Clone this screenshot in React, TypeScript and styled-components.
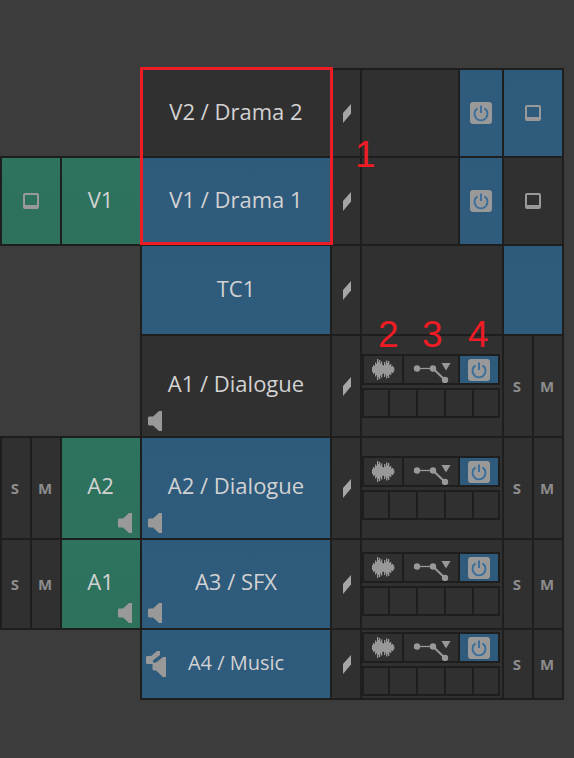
import styled, { createGlobalStyle } from 'styled-components'

const GlobalStyle = createGlobalStyle`
  html, body {
    margin: 0;
    background: #3c3c3c;
  }
`

const Page = styled.div`
  position: relative;
  width: 574px;
  height: 758px;
  padding: 70px 0 0 2px;
  box-sizing: border-box;
  overflow: hidden;
  font-family: "Open Sans", "Liberation Sans", sans-serif;
`

const Grid = styled.div`
  display: grid;
  grid-template-columns: 28px 28px 78px 188px 28px 96px 42px 28px 28px;
  grid-template-rows: 86px 86px 88px 100px 100px 88px 68px;
  gap: 2px;
`

const Cell = styled.div<{ $col: string; $row: number }>`
  grid-column: ${(p) => p.$col};
  grid-row: ${(p) => p.$row};
  position: relative;
  display: flex;
  align-items: center;
  justify-content: center;
  background: #303030;
  box-shadow: 0 0 0 2px #1e1e1e;
`

const BLUE = 'linear-gradient(180deg, #2e5a7c, #2f5b7d)'
const GREEN = 'linear-gradient(180deg, #2d735f, #2e715d)'

const NameCell = styled(Cell)<{ $small?: boolean; $active: boolean; $lift: number }>`
  padding-bottom: ${(p) => p.$lift}px;
  box-sizing: border-box;
  background: ${(p) => (p.$active ? BLUE : '#303030')};
  color: #d2d2d2;
  font-size: ${(p) => (p.$small ? '20px' : '22px')};
`

const PatchCell = styled(Cell)<{ $lift: number }>`
  padding: 0 1px ${(p) => p.$lift}px 0;
  box-sizing: border-box;
  background: ${GREEN};
  color: #d2d2d2;
  font-size: 22px;
`

const MonitorCell = styled(Cell)<{ $tone: 'blue' | 'green' | 'dark' }>`
  background: ${(p) => (p.$tone === 'blue' ? BLUE : p.$tone === 'green' ? GREEN : '#303030')};
`

const PowerCell = styled(Cell)`
  background: ${BLUE};
`

const LockCell = styled(Cell)`
  padding-left: 2px;
  box-sizing: border-box;
`

const SoloMute = styled(Cell)`
  padding-right: 2px;
  box-sizing: border-box;
  color: #8c8c8c;
  font-size: 15px;
  font-weight: 700;
`

const Strip = styled(Cell)`
  flex-direction: column;
  align-items: flex-start;
  gap: 3px;
`

const ButtonRow = styled.div`
  display: grid;
  grid-template-columns: 38px 54px 38px;
  gap: 2px;
  width: 138px;
  height: 31px;
  padding: 2px;
  box-sizing: border-box;
  background: #1e1e1e;
`

const StripButton = styled.div<{ $active?: boolean }>`
  display: flex;
  align-items: center;
  justify-content: center;
  background: ${(p) => (p.$active ? '#2e5a7c' : '#303030')};
`

const SendRow = styled.div`
  display: grid;
  grid-template-columns: 24px 26px 26px 26px 24px;
  gap: 2px;
  width: 138px;
  height: 30px;
  padding: 2px;
  box-sizing: border-box;
  background: #1e1e1e;
`

const SendSlot = styled.div`
  background: #303030;
`

const PowerBox = styled.div`
  display: flex;
  align-items: center;
  justify-content: center;
  width: 22px;
  height: 22px;
  border-radius: 3px;
  background: #999999;
`

const SpeakerSlot = styled.div<{ $left: number; $bottom: number }>`
  position: absolute;
  left: ${(p) => p.$left}px;
  bottom: ${(p) => p.$bottom}px;
  display: flex;
`

const SelectionBox = styled.div`
  position: absolute;
  left: 140px;
  top: 67px;
  width: 193px;
  height: 178px;
  box-sizing: border-box;
  border: 3px solid #ee1c25;
`

const Callout = styled.div<{ $left: number; $top: number }>`
  position: absolute;
  left: ${(p) => p.$left}px;
  top: ${(p) => p.$top}px;
  color: #ee1c25;
  font-family: "Liberation Sans", Arial, sans-serif;
  font-size: 37px;
  line-height: 40px;
`

function PowerIcon() {
  return (
    <PowerBox>
      <svg width="18" height="18" viewBox="0 0 18 18" fill="none" stroke="#3a6f9c" strokeWidth="1.9">
        <path d="M5.500 4.400a6.500 6.500 0 1 0 7 0" />
        <path d="M9 1.500v7.500" />
      </svg>
    </PowerBox>
  )
}

function ScreenIcon() {
  return (
    <svg width="16" height="16" viewBox="0 0 16 16">
      <path
        fillRule="evenodd"
        fill="#999999"
        d="M2 0h12a2 2 0 0 1 2 2v12a2 2 0 0 1-2 2H2a2 2 0 0 1-2-2V2a2 2 0 0 1 2-2zM2 2v10h12V2z"
      />
    </svg>
  )
}

function LockMark() {
  return (
    <svg width="8" height="19" viewBox="0 0 8 19">
      <path fill="#a6a6a6" d="M8 0v9.500L0 19V9z" />
    </svg>
  )
}

function Speaker() {
  return (
    <svg width="14" height="20" viewBox="0 0 14 20">
      <path fill="#999999" d="M11 0h3v20h-3l-6-5.500H1l-1-1v-7l1-1h4z" />
    </svg>
  )
}

function OffsetSpeaker() {
  return (
    <svg width="20" height="26" viewBox="0 0 20 26">
      <path fill="#999999" d="M17 6h3v20h-3l-7-6.500H7.500l-1-1v-6l1-1H10z" />
      <path fill="#999999" d="M11 0h3v4L7 9.500v3.500H1l-1-1V6l1-1h4z" />
    </svg>
  )
}

const waveBars = [5, 9, 7, 14, 11, 21, 15, 19, 12, 16, 9, 8, 15, 10, 18, 13, 17, 9, 11, 6, 7, 4]

function WaveIcon() {
  return (
    <svg width="24" height="21" viewBox="0 0 24 21">
      {waveBars.map((h, i) => (
        <rect key={i} x={1 + i} y={(21 - h) / 2} width="1.300" height={h} fill="#999999" />
      ))}
    </svg>
  )
}

function RouteIcon() {
  return (
    <svg width="42" height="26" viewBox="0 0 42 26">
      <circle cx="7" cy="11.500" r="3.200" fill="#999999" />
      <circle cx="23" cy="11.500" r="3.200" fill="#999999" />
      <circle cx="35" cy="23" r="3.200" fill="#999999" />
      <path d="M9 11.500h12" stroke="#999999" strokeWidth="1.300" fill="none" />
      <path d="M24 12.500l11 10.500" stroke="#999999" strokeWidth="2" fill="none" />
      <path d="M31.500 6h9l-4.500 7.500z" fill="#999999" />
    </svg>
  )
}

const nameRows = [
  { row: 1, label: 'V2 / Drama 2', active: false, lift: 4 },
  { row: 2, label: 'V1 / Drama 1', active: true, lift: 4 },
  { row: 3, label: 'TC1', active: true, lift: 4 },
  { row: 4, label: 'A1 / Dialogue', active: false, lift: 6 },
  { row: 5, label: 'A2 / Dialogue', active: true, lift: 6 },
  { row: 6, label: 'A3 / SFX', active: true, lift: 7 },
]

export default function App() {
  return (
    <Page>
      <GlobalStyle />
      <Grid>
        <MonitorCell $col="1 / 3" $row={2} $tone="green">
          <ScreenIcon />
        </MonitorCell>
        <PatchCell $col="3" $row={2} $lift={4}>V1</PatchCell>

        {[5, 6].map((row) => (
          <SoloMute key={`s${row}`} $col="1" $row={row}>S</SoloMute>
        ))}
        {[5, 6].map((row) => (
          <SoloMute key={`m${row}`} $col="2" $row={row}>M</SoloMute>
        ))}
        <PatchCell $col="3" $row={5} $lift={6}>
          A2
          <SpeakerSlot $left={56} $bottom={5}><Speaker /></SpeakerSlot>
        </PatchCell>
        <PatchCell $col="3" $row={6} $lift={7}>
          A1
          <SpeakerSlot $left={56} $bottom={5}><Speaker /></SpeakerSlot>
        </PatchCell>

        {nameRows.map((t) => (
          <NameCell key={t.row} $col="4" $row={t.row} $active={t.active} $lift={t.lift}>
            {t.label}
            {t.row > 3 && (
              <SpeakerSlot $left={6} $bottom={5}><Speaker /></SpeakerSlot>
            )}
          </NameCell>
        ))}
        <NameCell $col="4" $row={7} $active $small $lift={4}>
          A4 / Music
          <SpeakerSlot $left={4} $bottom={21}><OffsetSpeaker /></SpeakerSlot>
        </NameCell>

        {[1, 2, 3, 4, 5, 6, 7].map((row) => (
          <LockCell key={row} $col="5" $row={row}>
            <LockMark />
          </LockCell>
        ))}

        {[1, 2].map((row) => (
          <Cell key={row} $col="6" $row={row} />
        ))}
        <Cell $col="6 / 8" $row={3} />
        <PowerCell $col="7" $row={1}><PowerIcon /></PowerCell>
        <PowerCell $col="7" $row={2}><PowerIcon /></PowerCell>

        <MonitorCell $col="8 / 10" $row={1} $tone="blue"><ScreenIcon /></MonitorCell>
        <MonitorCell $col="8 / 10" $row={2} $tone="dark"><ScreenIcon /></MonitorCell>
        <MonitorCell $col="8 / 10" $row={3} $tone="blue" />

        {[4, 5, 6, 7].map((row) => (
          <Strip key={row} $col="6 / 8" $row={row}>
            <ButtonRow>
              <StripButton><WaveIcon /></StripButton>
              <StripButton><RouteIcon /></StripButton>
              <StripButton $active><PowerIcon /></StripButton>
            </ButtonRow>
            <SendRow>
              {[0, 1, 2, 3, 4].map((i) => (
                <SendSlot key={i} />
              ))}
            </SendRow>
          </Strip>
        ))}

        {[4, 5, 6, 7].map((row) => (
          <SoloMute key={`rs${row}`} $col="8" $row={row}>S</SoloMute>
        ))}
        {[4, 5, 6, 7].map((row) => (
          <SoloMute key={`rm${row}`} $col="9" $row={row}>M</SoloMute>
        ))}
      </Grid>

      <SelectionBox />
      <Callout $left={355} $top={135}>1</Callout>
      <Callout $left={378} $top={315}>2</Callout>
      <Callout $left={422} $top={315}>3</Callout>
      <Callout $left={468} $top={315}>4</Callout>
    </Page>
  )
}
